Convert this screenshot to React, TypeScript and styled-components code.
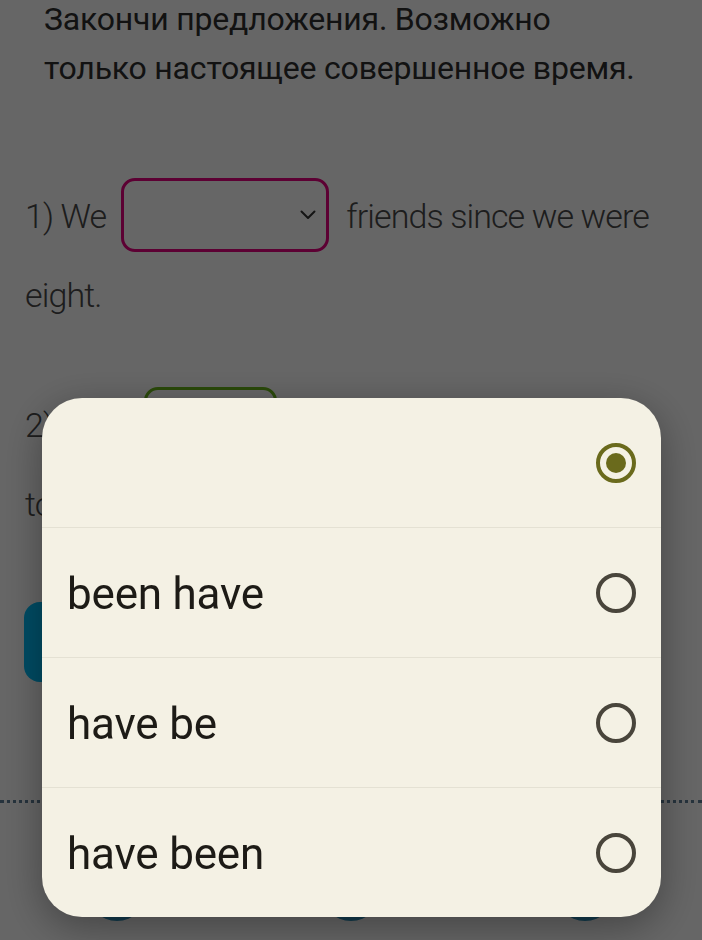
import React from "react";
import styled, { createGlobalStyle } from "styled-components";

const Global = createGlobalStyle`
  html, body { margin: 0; padding: 0; height: 100%; overflow: hidden; background: #ffffff; }
  body { font-family: Roboto, "Noto Sans", sans-serif; }
`;

const Page = styled.div`
  width: 702px;
  height: 940px;
  overflow: hidden;
  background: #ffffff;
  color: #444444;
`;

const Instructions = styled.p`
  margin: -5px 0 0 0;
  padding: 0 20px 0 44px;
  font-size: 32px;
  line-height: 49px;
  font-weight: 400;
  color: #2e2e2e;
  letter-spacing: -0.2px;
`;

const Item = styled.p<{ $gap: number }>`
  margin: ${(p) => p.$gap}px 0 0 0;
  padding: 0 20px 0 25px;
  font-size: 34px;
  line-height: 79px;
  font-weight: 300;
  letter-spacing: -0.9px;
  color: #4a4a4a;
`;

const Blank = styled.span<{ $color: string; $width: number }>`
  display: inline-flex;
  align-items: center;
  justify-content: flex-end;
  box-sizing: border-box;
  width: ${(p) => p.$width}px;
  height: 74px;
  margin: -4px 17px 4px 15px;
  padding-right: 10px;
  border: 3px solid ${(p) => p.$color};
  border-radius: 14px;
  vertical-align: middle;
  background: #ffffff;
`;

const CheckButton = styled.div`
  margin: 58px 0 0 24px;
  width: 240px;
  height: 80px;
  border-radius: 16px;
  background: #00bdf8;
`;

const BottomBar = styled.div`
  margin-top: 118px;
  border-top: 3px dotted #5f7f98;
  display: grid;
  grid-template-columns: repeat(3, 1fr);
  padding: 58px 0 0 0;
`;

const NavItem = styled.div`
  display: flex;
  flex-direction: column;
  align-items: center;
  gap: 14px;
`;

const NavIcon = styled.div`
  width: 60px;
  height: 60px;
  border-radius: 50%;
  background: #2e92bd;
`;

const NavLabel = styled.span`
  font-size: 28px;
  color: #2e92bd;
  font-weight: 500;
`;

const Overlay = styled.div`
  position: fixed;
  inset: 0;
  background: rgba(0, 0, 0, 0.6);
  display: flex;
  flex-direction: column;
  justify-content: flex-end;
  align-items: center;
  padding-bottom: 23px;
`;

const Dialog = styled.div`
  width: 619px;
  margin-left: 1px;
  background: #f4f1e4;
  border-radius: 40px;
  overflow: hidden;
  box-shadow: 0 10px 40px rgba(0, 0, 0, 0.35);
  display: flex;
  flex-direction: column;
`;

const Option = styled.div`
  height: 129px;
  display: flex;
  align-items: center;
  justify-content: space-between;
  padding: 0 25px;
  border-top: 1px solid #e4e1d3;
  &:first-child { border-top: none; }
`;

const OptionText = styled.span`
  font-family: Roboto, "Noto Sans", sans-serif;
  font-size: 44px;
  color: #1d1b16;
  letter-spacing: -0.2px;
  padding-top: 3px;
`;

const Radio = styled.span<{ $checked?: boolean }>`
  box-sizing: border-box;
  width: 40px;
  height: 40px;
  border-radius: 50%;
  border: 4px solid ${(p) => (p.$checked ? "#6a6a1c" : "#49453b")};
  display: flex;
  align-items: center;
  justify-content: center;
  flex-shrink: 0;
  &::after {
    content: "";
    width: 20px;
    height: 20px;
    border-radius: 50%;
    background: #6a6a1c;
    display: ${(p) => (p.$checked ? "block" : "none")};
  }
`;

const Chevron = () => (
  <svg width="16" height="10" viewBox="0 0 16 10" fill="none">
    <path d="M1.5 1.5 L8 8 L14.5 1.5" stroke="#333" strokeWidth="2" strokeLinecap="round" strokeLinejoin="round" />
  </svg>
);

const options = [
  { label: "", checked: true },
  { label: "been have" },
  { label: "have be" },
  { label: "have been" },
];

export default function App() {
  return (
    <>
      <Global />
      <Page>
        <Instructions>
          Закончи предложения. Возможно
          <br />
          только настоящее совершенное время.
        </Instructions>
        <Item $gap={84}>
          1) We
          <Blank $color="#e6007f" $width={208}>
            <Chevron />
          </Blank>
          friends since we were
          <br />
          eight.
        </Item>
        <Item $gap={51}>
          2) They
          <Blank $color="#6bb81a" $width={133} />
          never been
          <br />
          to Paris.
        </Item>
        <CheckButton />
        <BottomBar>
          <NavItem>
            <NavIcon />
            <NavLabel>Главная</NavLabel>
          </NavItem>
          <NavItem>
            <NavIcon />
            <NavLabel>Задания</NavLabel>
          </NavItem>
          <NavItem>
            <NavIcon />
            <NavLabel>Профиль</NavLabel>
          </NavItem>
        </BottomBar>
      </Page>
      <Overlay>
        <Dialog role="radiogroup">
          {options.map((o, i) => (
            <Option key={i} role="radio" aria-checked={!!o.checked}>
              <OptionText>{o.label}</OptionText>
              <Radio $checked={o.checked} />
            </Option>
          ))}
        </Dialog>
      </Overlay>
    </>
  );
}
